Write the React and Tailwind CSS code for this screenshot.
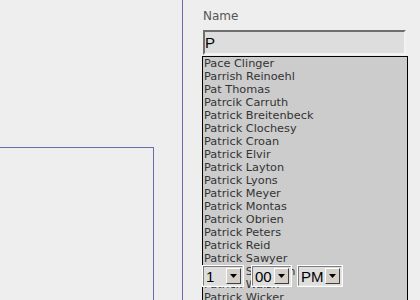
const names = [
  "Pace Clinger",
  "Parrish Reinoehl",
  "Pat Thomas",
  "Patrcik Carruth",
  "Patrick Breitenbeck",
  "Patrick Clochesy",
  "Patrick Croan",
  "Patrick Elvir",
  "Patrick Layton",
  "Patrick Lyons",
  "Patrick Meyer",
  "Patrick Montas",
  "Patrick Obrien",
  "Patrick Peters",
  "Patrick Reid",
  "Patrick Sawyer",
  "Patrick Shannon",
  "Patrick Walsh",
  "Patrick Wicker",
];

// old-style dropdown with a raised arrow button
const TimeSelect = ({ value, className }) => (
  <div className={`h-[22px] border border-white ${className}`}>
    <div className="h-full flex items-center bg-[#dedede] border border-t-[#7c7c7c] border-l-[#7c7c7c] border-b-[#e6e6e6] border-r-[#e6e6e6]">
      <span className="flex-1 pl-[2px] text-[15px] leading-none text-black [font-family:'Liberation_Sans',Arial,sans-serif]">
        {value}
      </span>
      <div className="w-[15px] h-[16px] mr-[1px] flex items-center justify-center bg-[#d4d0c8] border border-t-white border-l-white border-b-[#404040] border-r-[#404040]">
        <svg width="7" height="4" viewBox="0 0 7 4">
          <path d="M0 0h7L3.5 4z" fill="#000" />
        </svg>
      </div>
    </div>
  </div>
);

export default function App() {
  return (
    <div className="w-[420px] h-[300px] bg-[#eeeeee] flex overflow-hidden">
      <div className="w-[183px] shrink-0 border-r border-[#6b6bab] pt-[147px]">
        <div className="w-[154px] h-[200px] border-t border-r border-[#6b6bab]" />
      </div>

      <div className="relative flex-1 pl-[20px] pt-[9px]">
        <div className="text-[12px] leading-[14px] text-[#555555] [font-family:'DejaVu_Sans',Verdana,sans-serif]">
          Name
        </div>
        <div className="mt-[7px] w-[203px] h-[25px] flex items-center bg-[#dddddd] border-2 border-t-[#6e6e6e] border-l-[#6e6e6e] border-b-[#f2f2f2] border-r-[#f2f2f2]">
          <span className="text-[15px] leading-none text-black [font-family:'Liberation_Sans',Arial,sans-serif]">
            P
          </span>
        </div>
        <div className="ml-[-1px] mt-[1px] w-[206px] h-[260px] bg-[#cccccc] border border-black overflow-hidden">
          {names.map((n) => (
            <div
              key={n}
              className="h-[13px] leading-[13px] pl-[1px] text-[11.3px] text-[#333333] whitespace-nowrap [font-family:'DejaVu_Sans',Verdana,sans-serif]"
            >
              {n}
            </div>
          ))}
        </div>

        <div className="absolute left-[19px] top-[265px] flex">
          <TimeSelect value="1" className="w-[42px]" />
          <TimeSelect value="00" className="w-[41px] ml-[7px]" />
          <TimeSelect value="PM" className="w-[46px] ml-[5px]" />
        </div>
      </div>
    </div>
  );
}
